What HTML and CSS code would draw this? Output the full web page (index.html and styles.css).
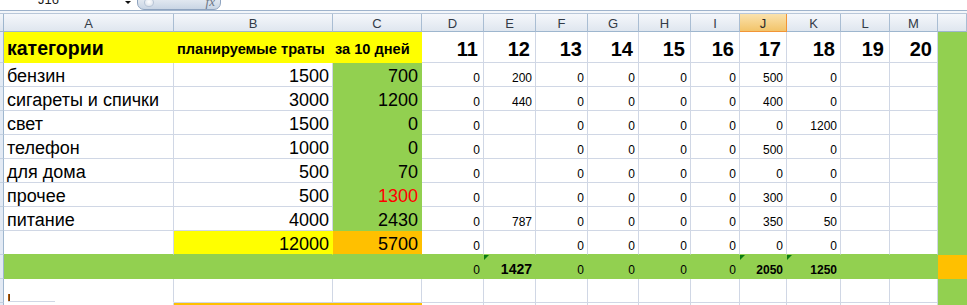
FILE: index.html
```html
<!DOCTYPE html>
<html lang="ru">
<head>
<meta charset="utf-8">
<title>Расходы</title>
<link rel="stylesheet" href="styles.css">
</head>
<body>
<div class="app">
  <div class="fbar">
    <div class="namebox"><span class="nm">J16</span><span class="dd"></span></div>
    <div class="fxbtn"><span class="knob"></span><span class="fx">fx</span></div>
    <div class="finput"></div>
  </div>
  <div class="sep"></div>
  <div class="sheet">
    <div class="row hdr">
      <div class="s"></div>
      <div class="h">A</div><div class="h">B</div><div class="h">C</div><div class="h">D</div><div class="h">E</div><div class="h">F</div><div class="h">G</div><div class="h">H</div><div class="h">I</div><div class="h sel">J</div><div class="h">K</div><div class="h">L</div><div class="h">M</div><div class="h"></div>
    </div>
    <div class="row r1">
      <div class="s"></div>
      <div class="c y cat">категории</div>
      <div class="c y sub">планируемые траты</div>
      <div class="c y sub sub2">за 10 дней</div>
      <div class="c day">11</div><div class="c day">12</div><div class="c day">13</div><div class="c day">14</div><div class="c day">15</div><div class="c day">16</div><div class="c day">17</div><div class="c day">18</div><div class="c day">19</div><div class="c day">20</div>
      <div class="c g"></div>
    </div>
    <div class="row">
      <div class="s"></div>
      <div class="c t">бензин</div><div class="c n">1500</div><div class="c n g">700</div>
      <div class="c">0</div><div class="c">200</div><div class="c">0</div><div class="c">0</div><div class="c">0</div><div class="c">0</div><div class="c">500</div><div class="c">0</div><div class="c"></div><div class="c"></div>
      <div class="c g"></div>
    </div>
    <div class="row">
      <div class="s"></div>
      <div class="c t">сигареты и спички</div><div class="c n">3000</div><div class="c n g">1200</div>
      <div class="c">0</div><div class="c">440</div><div class="c">0</div><div class="c">0</div><div class="c">0</div><div class="c">0</div><div class="c">400</div><div class="c">0</div><div class="c"></div><div class="c"></div>
      <div class="c g"></div>
    </div>
    <div class="row">
      <div class="s"></div>
      <div class="c t">свет</div><div class="c n">1500</div><div class="c n g">0</div>
      <div class="c">0</div><div class="c"></div><div class="c">0</div><div class="c">0</div><div class="c">0</div><div class="c">0</div><div class="c">0</div><div class="c">1200</div><div class="c"></div><div class="c"></div>
      <div class="c g"></div>
    </div>
    <div class="row">
      <div class="s"></div>
      <div class="c t">телефон</div><div class="c n">1000</div><div class="c n g">0</div>
      <div class="c">0</div><div class="c"></div><div class="c">0</div><div class="c">0</div><div class="c">0</div><div class="c">0</div><div class="c">500</div><div class="c">0</div><div class="c"></div><div class="c"></div>
      <div class="c g"></div>
    </div>
    <div class="row">
      <div class="s"></div>
      <div class="c t">для дома</div><div class="c n">500</div><div class="c n g">70</div>
      <div class="c">0</div><div class="c"></div><div class="c">0</div><div class="c">0</div><div class="c">0</div><div class="c">0</div><div class="c">0</div><div class="c">0</div><div class="c"></div><div class="c"></div>
      <div class="c g"></div>
    </div>
    <div class="row">
      <div class="s"></div>
      <div class="c t">прочее</div><div class="c n">500</div><div class="c n g red">1300</div>
      <div class="c">0</div><div class="c"></div><div class="c">0</div><div class="c">0</div><div class="c">0</div><div class="c">0</div><div class="c">300</div><div class="c">0</div><div class="c"></div><div class="c"></div>
      <div class="c g"></div>
    </div>
    <div class="row">
      <div class="s"></div>
      <div class="c t">питание</div><div class="c n">4000</div><div class="c n g">2430</div>
      <div class="c">0</div><div class="c">787</div><div class="c">0</div><div class="c">0</div><div class="c">0</div><div class="c">0</div><div class="c">350</div><div class="c">50</div><div class="c"></div><div class="c"></div>
      <div class="c g"></div>
    </div>
    <div class="row r9">
      <div class="s"></div>
      <div class="c t"></div><div class="c n y">12000</div><div class="c n o">5700</div>
      <div class="c">0</div><div class="c"></div><div class="c">0</div><div class="c">0</div><div class="c">0</div><div class="c">0</div><div class="c">0</div><div class="c">0</div><div class="c"></div><div class="c"></div>
      <div class="c g"></div>
    </div>
    <div class="row r10">
      <div class="s"></div>
      <div class="c g"></div><div class="c g"></div><div class="c g"></div>
      <div class="c g">0</div><div class="c g b14 tri">1427</div><div class="c g">0</div><div class="c g">0</div><div class="c g">0</div><div class="c g">0</div><div class="c g b12 tri">2050</div><div class="c g b12 tri">1250</div><div class="c g"></div><div class="c g"></div>
      <div class="c o"></div>
    </div>
    <div class="row r11">
      <div class="s"></div>
      <div class="c t a11"><span class="tick"></span></div><div class="c"></div><div class="c"></div>
      <div class="c"></div><div class="c"></div><div class="c"></div><div class="c"></div><div class="c"></div><div class="c"></div><div class="c"></div><div class="c"></div><div class="c"></div><div class="c"></div>
      <div class="c g"></div>
    </div>
    <div class="row r12">
      <div class="s"></div>
      <div class="c"></div><div class="c o"></div><div class="c o"></div>
      <div class="c"></div><div class="c"></div><div class="c"></div><div class="c"></div><div class="c"></div><div class="c"></div><div class="c"></div><div class="c"></div><div class="c"></div><div class="c"></div>
      <div class="c g"></div>
    </div>
  </div>
</div>
</body>
</html>
```
FILE: styles.css
```css
* { box-sizing: border-box; }
html, body { margin: 0; padding: 0; background: #fff; }
body {
  width: 967px;
  height: 305px;
  overflow: hidden;
  font-family: "Liberation Sans", Arial, sans-serif;
  color: #000;
}
.app {
  --cols: 4px 170px 159px 89px 62px 52px 52px 51px 52px 49px 47px 54px 49px 48px 29px;
  display: flex;
  flex-direction: column;
}

/* formula bar */
.fbar {
  height: 10px;
  display: flex;
  overflow: hidden;
  background: #fff;
}
.namebox {
  width: 137px;
  display: flex;
  align-items: flex-start;
  padding-left: 38px;
  padding-right: 6px;
}
.nm {
  font-size: 13px;
  line-height: 13px;
  margin-top: -7px;
  color: #1a1a1a;
}
.dd {
  margin-left: auto;
  margin-top: 1px;
  width: 0;
  height: 0;
  border-left: 3px solid transparent;
  border-right: 3px solid transparent;
  border-top: 3px solid #111;
}
.fxbtn {
  width: 84px;
  height: 16px;
  margin-top: -6px;
  border: 1px solid #8fa4c0;
  border-radius: 0 0 7px 7px;
  background: linear-gradient(#eef2f7, #c9d5e4);
  display: flex;
  align-items: flex-end;
  padding: 0 5px 2px 6px;
}
.knob {
  width: 10px;
  height: 9px;
  border-radius: 50%;
  background: radial-gradient(circle at 50% 40%, #ffffff, #d5dde8);
  border: 1px solid #b8c5d6;
}
.fx {
  margin-left: auto;
  font-family: "Liberation Serif", serif;
  font-style: italic;
  font-size: 13px;
  line-height: 10px;
  color: #6b7686;
}
.finput { flex: 1; background: #fff; }

.sep {
  height: 4px;
  border-top: 1px solid #9fb3cc;
  border-bottom: 1px solid #b9c7d9;
  background: #f3f6fa;
}

/* sheet */
.sheet { display: flex; flex-direction: column; }
.row {
  display: grid;
  grid-template-columns: var(--cols);
  height: 24px;
}
.s {
  background: #e3eaf4;
  border-right: 1px solid #9eb6ce;
  border-bottom: 1px solid #c3d0e0;
}
.hdr { height: 18px; }
.hdr .s { background: linear-gradient(#f3f6fa, #dde4ee); border-bottom-color: #9eb6ce; }
.h {
  background: linear-gradient(#f5f7fb, #dfe6ef);
  border-right: 1px solid #a9bdd3;
  border-bottom: 1px solid #9eb6ce;
  display: flex;
  align-items: center;
  justify-content: center;
  font-size: 13px;
  line-height: 1;
  color: #333b47;
  padding-top: 1px;
}
.h.sel {
  background: linear-gradient(#fbe2ad, #f2c46a);
  border-right-color: #f29536;
  border-bottom-color: #f29536;
  color: #2a2a2a;
}

.c {
  position: relative;
  border-right: 1px solid #d0d7e5;
  border-bottom: 1px solid #d0d7e5;
  display: flex;
  align-items: flex-end;
  justify-content: flex-end;
  padding: 0 3px 2px 3px;
  font-size: 12px;
  line-height: 1;
  white-space: nowrap;
  overflow: hidden;
}
.c.t {
  justify-content: flex-start;
  font-size: 18px;
  padding: 0 3px 1px 3px;
  overflow: visible;
}
.c.n { font-size: 18px; padding: 0 3px 1px 3px; }

.r1 { height: 31px; }
.cat {
  justify-content: flex-start;
  font-size: 19.5px;
  font-weight: bold;
  padding: 0 3px 4px 3px;
}
.sub {
  justify-content: flex-start;
  font-size: 14.6px;
  font-weight: bold;
  padding: 0 2px 5px 3px;
}
.sub2 { padding-left: 2px; }
.day {
  font-size: 20px;
  font-weight: bold;
  padding: 0 5px 3px 3px;
}

.y { background: #ffff00; border-color: #ffff00; }
.g { background: #92d050; border-color: #92d050; }
.o { background: #ffc000; border-color: #ffc000; }
.red { color: #ff0000; }

.r9 .c { border-bottom-color: #92d050; }
.r10 .c { padding-bottom: 2px; }
.b14 { font-size: 14px; font-weight: bold; }
.b12 { font-size: 12px; font-weight: bold; }
.tri::before {
  content: "";
  position: absolute;
  top: 0;
  left: 0;
  border-top: 5px solid #0b7a12;
  border-right: 5px solid transparent;
}

.a11 {
  border-bottom-color: #fff;
  background: linear-gradient(#d0d7e5, #d0d7e5) no-repeat 4px 100% / 47px 1px;
  padding-bottom: 6px;
}
.tick {
  display: block;
  width: 2px;
  height: 7px;
  margin-left: 1px;
  background: linear-gradient(90deg, #c86a10, #5a2a00);
}
.r12 { height: 6px; }
```
